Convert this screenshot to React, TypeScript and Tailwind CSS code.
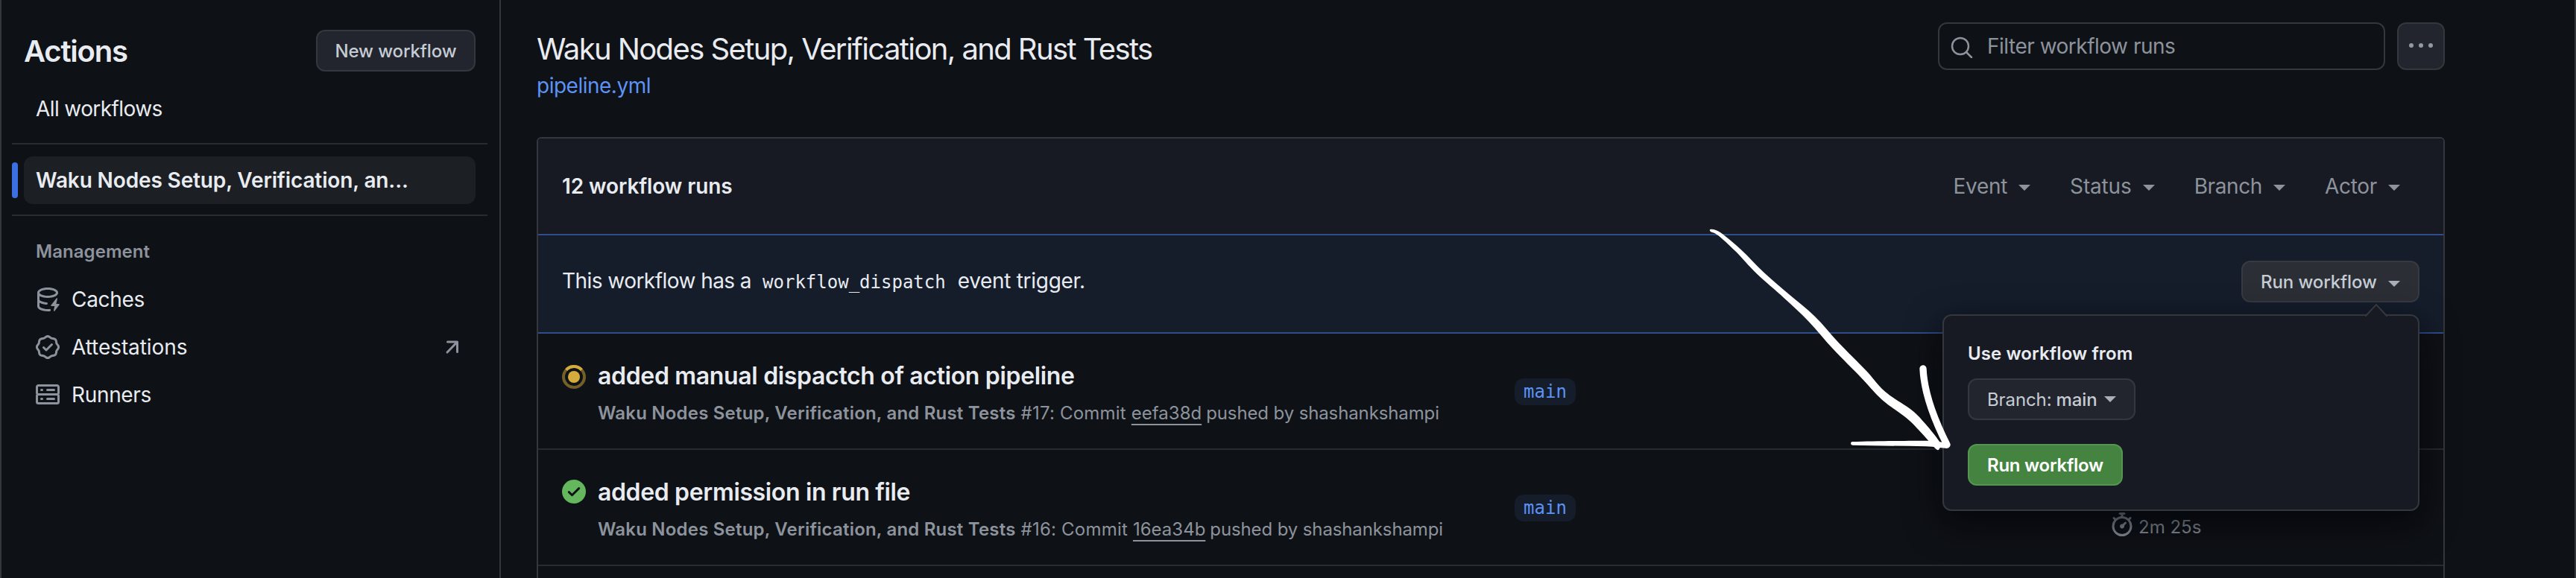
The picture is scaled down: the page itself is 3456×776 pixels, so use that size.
import type { ReactNode } from 'react';

type Point = [number, number];

/** Closed outline through the points, rounded with Catmull-Rom segments. */
function smoothOutline(points: Point[]): string {
  const n = points.length;
  const at = (i: number) => points[(i + n) % n];
  let d = `M${at(0)[0]} ${at(0)[1]}`;
  for (let i = 0; i < n; i++) {
    const [a, b, c, e] = [at(i - 1), at(i), at(i + 1), at(i + 2)];
    d += `C${b[0] + (c[0] - a[0]) / 6} ${b[1] + (c[1] - a[1]) / 6} ${c[0] - (e[0] - b[0]) / 6} ${c[1] - (e[1] - b[1]) / 6} ${c[0]} ${c[1]}`;
  }
  return d + 'Z';
}

const shaft: Point[] = [
  [138, 83], [175, 97], [260, 168], [350, 258], [450, 345], [555, 435], [650, 540], [760, 652], [838, 738],
  [945, 812], [1000, 868], [1060, 945], [1056, 966], [1042, 968], [985, 905], [925, 845], [825, 770], [740, 680],
  [630, 568], [530, 455], [430, 360], [320, 262], [235, 172], [165, 108], [134, 92],
];

const icons = {
  cache:
    'M2.5 5.724V8c0 .248.238.7 1.169 1.159.874.43 2.144.745 3.62.822a.75.75 0 1 1-.078 1.498c-1.622-.085-3.102-.432-4.204-.975a5.565 5.565 0 0 1-.507-.28V12.5c0 .133.058.318.282.551.227.237.591.483 1.101.707 1.015.447 2.47.742 4.117.742.406 0 .802-.018 1.183-.052a.751.751 0 1 1 .134 1.494C8.89 15.98 8.45 16 8 16c-1.805 0-3.475-.32-4.721-.869-.623-.274-1.173-.619-1.579-1.041-.408-.425-.7-.964-.7-1.59v-9c0-.626.292-1.165.7-1.591.406-.42.956-.766 1.579-1.04C4.525.32 6.195 0 8 0c1.806 0 3.476.32 4.721.869.623.274 1.173.619 1.579 1.041.408.425.7.964.7 1.59 0 .626-.292 1.165-.7 1.591-.406.42-.956.766-1.578 1.04C11.475 6.68 9.805 7 8 7c-1.805 0-3.475-.32-4.721-.869a6.15 6.15 0 0 1-.779-.407Zm0-2.224c0 .133.058.318.282.551.227.237.591.483 1.101.707C4.898 5.205 6.353 5.5 8 5.5c1.646 0 3.101-.295 4.118-.742.508-.224.873-.471 1.1-.708.224-.232.282-.417.282-.55 0-.133-.058-.318-.282-.551-.227-.237-.591-.483-1.101-.707C11.102 1.795 9.647 1.5 8 1.5c-1.646 0-3.101.295-4.118.742-.508.224-.873.471-1.1.708-.224.232-.282.417-.282.55ZM14.49 7.582a.375.375 0 0 0-.66-.313l-3.625 4.625a.375.375 0 0 0 .295.606h2.127l-.619 2.922a.375.375 0 0 0 .666.304l3.125-4.125A.375.375 0 0 0 15.5 11h-1.778l.769-3.418Z',
  verified:
    'm9.585.52.929.68c.153.112.331.186.518.215l1.138.175a2.678 2.678 0 0 1 2.24 2.24l.174 1.139c.029.187.103.365.215.518l.68.928a2.677 2.677 0 0 1 0 3.17l-.68.928a1.174 1.174 0 0 0-.215.518l-.175 1.138a2.678 2.678 0 0 1-2.241 2.241l-1.138.175a1.17 1.17 0 0 0-.518.215l-.928.68a2.677 2.677 0 0 1-3.17 0l-.928-.68a1.174 1.174 0 0 0-.518-.215L3.83 14.41a2.678 2.678 0 0 1-2.24-2.24l-.175-1.138a1.17 1.17 0 0 0-.215-.518l-.68-.928a2.677 2.677 0 0 1 0-3.17l.68-.928c.112-.153.186-.331.215-.518l.175-1.14a2.678 2.678 0 0 1 2.24-2.24l1.139-.175c.187-.029.365-.103.518-.215l.928-.68a2.677 2.677 0 0 1 3.17 0ZM7.303 1.728l-.927.68a2.67 2.67 0 0 1-1.18.489l-1.137.174a1.179 1.179 0 0 0-.987.987l-.174 1.136a2.677 2.677 0 0 1-.489 1.18l-.68.928a1.18 1.18 0 0 0 0 1.394l.68.927c.256.348.424.753.489 1.18l.174 1.137c.078.509.478.909.987.987l1.136.174a2.67 2.67 0 0 1 1.18.489l.928.68c.414.305.979.305 1.394 0l.927-.68a2.67 2.67 0 0 1 1.18-.489l1.137-.174a1.18 1.18 0 0 0 .987-.987l.174-1.136a2.67 2.67 0 0 1 .489-1.18l.68-.928a1.176 1.176 0 0 0 0-1.394l-.68-.927a2.686 2.686 0 0 1-.489-1.18l-.174-1.137a1.179 1.179 0 0 0-.987-.987l-1.136-.174a2.677 2.677 0 0 1-1.18-.489l-.928-.68a1.176 1.176 0 0 0-1.394 0ZM11.28 6.78l-3.75 3.75a.75.75 0 0 1-1.06 0L4.72 8.78a.751.751 0 0 1 .018-1.042.751.751 0 0 1 1.042-.018L7 8.94l3.22-3.22a.751.751 0 0 1 1.042.018.751.751 0 0 1 .018 1.042Z',
  server:
    'M1.75 1h12.5c.966 0 1.75.784 1.75 1.75v4c0 .372-.116.717-.314 1 .198.283.314.628.314 1v4a1.75 1.75 0 0 1-1.75 1.75H1.75A1.75 1.75 0 0 1 0 12.75v-4c0-.358.109-.707.314-1a1.739 1.739 0 0 1-.314-1v-4C0 1.784.784 1 1.75 1ZM1.5 2.75v4c0 .138.112.25.25.25h12.5a.25.25 0 0 0 .25-.25v-4a.25.25 0 0 0-.25-.25H1.75a.25.25 0 0 0-.25.25Zm.25 5.75a.25.25 0 0 0-.25.25v4c0 .138.112.25.25.25h12.5a.25.25 0 0 0 .25-.25v-4a.25.25 0 0 0-.25-.25ZM7 4.75A.75.75 0 0 1 7.75 4h4.5a.75.75 0 0 1 0 1.5h-4.5A.75.75 0 0 1 7 4.75ZM7.75 10h4.5a.75.75 0 0 1 0 1.5h-4.5a.75.75 0 0 1 0-1.5ZM3 4.75A.75.75 0 0 1 3.75 4h.5a.75.75 0 0 1 0 1.5h-.5A.75.75 0 0 1 3 4.75ZM3.75 10h.5a.75.75 0 0 1 0 1.5h-.5a.75.75 0 0 1 0-1.5Z',
  stopwatch:
    'M5.75.75A.75.75 0 0 1 6.5 0h3a.75.75 0 0 1 0 1.5h-.75v1l-.001.041a6.724 6.724 0 0 1 3.464 1.435l.007-.006.75-.75a.749.749 0 0 1 1.275.326.749.749 0 0 1-.215.734l-.75.75-.006.007a6.75 6.75 0 1 1-10.548 0L2.72 5.03l-.75-.75a.751.751 0 0 1 .018-1.042.751.751 0 0 1 1.042-.018l.75.75.007.006A6.72 6.72 0 0 1 7.25 2.541V1.5H6.5a.75.75 0 0 1-.75-.75ZM8 14.5a5.25 5.25 0 1 0-.001-10.501A5.25 5.25 0 0 0 8 14.5Zm.389-6.7 1.33-1.33a.75.75 0 1 1 1.061 1.06L9.45 8.861A1.503 1.503 0 0 1 8 10.75a1.499 1.499 0 1 1 .389-2.95Z',
};

function Icon({ path }: { path: string }) {
  return (
    <svg viewBox="0 0 16 16" className="size-8 shrink-0 fill-[#8d939c]">
      <path d={path} />
    </svg>
  );
}

function Caret({ className }: { className: string }) {
  return (
    <svg viewBox="0 0 16 8" className={`h-2 w-4 shrink-0 fill-current ${className}`}>
      <path d="M0 0h16L8 8Z" />
    </svg>
  );
}

function RunningIcon() {
  return (
    <svg viewBox="0 0 32 32" className="mt-[10px] size-8" fill="none">
      <circle cx="16" cy="16" r="14" stroke="#735f28" strokeWidth="4" />
      <path d="M5.6 6.6A14 14 0 0 1 26.4 6.6" stroke="#d4ab3c" strokeWidth="4" />
      <circle cx="16" cy="16" r="8" fill="#d4ab3c" />
    </svg>
  );
}

function SuccessIcon() {
  return (
    <svg viewBox="0 0 32 32" className="mt-2 size-8" fill="none">
      <circle cx="16" cy="16" r="16" fill="#65b75e" />
      <path d="M9.3 16.6 13.5 20.8 22.7 11.6" stroke="#0e1116" strokeWidth="2.9" strokeLinecap="round" strokeLinejoin="round" />
    </svg>
  );
}

function NavItem({ path, label, trailing }: { path: string; label: ReactNode; trailing?: ReactNode }) {
  return (
    <li className="flex h-16 items-center gap-4 pl-[46px] pr-[53px]">
      <Icon path={path} />
      {label}
      {trailing}
    </li>
  );
}

function Sidebar() {
  return (
    <aside className="h-full w-[672px] shrink-0 border-x-2 border-[#34373b] text-[28px] leading-[40px]">
      <div className="mt-10 flex h-14 items-center justify-between pl-[30px] pr-8">
        <h2 className="pt-[2px] text-[40px] leading-[56px] font-semibold tracking-[-1.2px]">Actions</h2>
        <button className="flex h-14 w-[214px] items-center justify-center rounded-xl border-2 border-[#34373c] bg-[#22252d] text-2xl font-medium tracking-[-0.1px] text-[#c6ccd4]">
          <span className="pt-[2px]">New workflow</span>
        </button>
      </div>
      <div className="mt-[18px] flex h-16 items-center pl-[46px] tracking-[-0.6px]">All workflows</div>
      <hr className="ml-[14px] mr-4 mt-[14px] border-t-2 border-[#282b30]" />
      <div className="mt-4 flex h-16 items-center gap-2 pl-[14px]">
        <span className="h-12 w-2 rounded bg-[#3c70e2]" />
        <span className="flex h-16 w-[606px] items-center rounded-xl bg-[#1c1f24] pl-4 font-semibold tracking-[-0.13px]">
          Waku Nodes Setup, Verification, an...
        </span>
      </div>
      <hr className="ml-[14px] mr-4 mt-[14px] border-t-2 border-[#282b30]" />
      <h3 className="mt-[30px] pl-[46px] text-2xl leading-[36px] font-semibold tracking-[0.05px] text-[#8d939c]">Management</h3>
      <ul className="mt-[14px]">
        <NavItem path={icons.cache} label={<span className="tracking-[-0.3px]">Caches</span>} />
        <NavItem
          path={icons.verified}
          label={<span className="tracking-[-0.07px]">Attestations</span>}
          trailing={
            <svg viewBox="0 0 20 20" className="ml-auto size-5" fill="none" stroke="#8d939c" strokeWidth="3">
              <path d="M3.5 3H16.5V16.5M16.5 3 3 17" strokeLinejoin="round" strokeLinecap="round" />
            </svg>
          }
        />
        <NavItem path={icons.server} label={<span className="tracking-[-0.33px]">Runners</span>} />
      </ul>
    </aside>
  );
}

function Popover() {
  return (
    <div className="absolute right-0 top-[72px] z-10 flex h-[264px] w-[640px] flex-col items-start rounded-xl border-2 border-[#34373c] bg-[#171a22] px-8 pt-[33px] text-2xl leading-[36px] shadow-[0_16px_48px_rgba(1,4,9,0.8)]">
      <svg viewBox="0 0 32 18" className="absolute -top-[16px] right-[40px] h-[18px] w-8">
        <path d="M2 17 16 1 30 17V18H2Z" fill="#171a22" />
        <path d="M1 16 H2 L16 1 30 16H31" fill="none" stroke="#34373c" strokeWidth="2" />
      </svg>
      <h4 className="font-semibold tracking-[0.1px] text-[#e8ebf0]">Use workflow from</h4>
      <button className="mt-[15px] flex h-14 w-[225px] items-center rounded-xl border-2 border-[#34373c] bg-[#22252d] pl-[24px] text-[#c6ccd4]">
        <span className="pt-[2px] tracking-[-0.1px]">Branch:</span>
        <span className="ml-[6px] pt-[2px] font-medium tracking-[-0.1px]">main</span>
        <Caret className="ml-auto mr-6 text-[#a9afb6]" />
      </button>
      <button className="mt-8 flex h-14 w-[208px] items-center justify-center rounded-xl border-2 border-[#559551] bg-[#448440] font-semibold tracking-[-0.25px] text-white">
        <span className="pt-[2px]">Run workflow</span>
      </button>
    </div>
  );
}

interface RunProps {
  icon: ReactNode;
  title: ReactNode;
  run: string;
  commit: string;
  duration?: string;
}

function RunRow({ icon, title, run, commit, duration }: RunProps) {
  return (
    <li className="flex h-[156px] items-start border-b-2 border-[#282b30] pl-8">
      <div className="flex w-[1278px] gap-4 pt-8">
        {icon}
        <div className="pt-px">
          <h3 className="text-[32px] leading-[48px] font-semibold">{title}</h3>
          <p className="mt-2 flex whitespace-nowrap text-2xl leading-[36px] text-[#8d939c]">
            <span className="font-semibold tracking-[0.2px]">Waku Nodes Setup, Verification, and Rust Tests</span>
            <span className="ml-[7px] tracking-[0.2px]">{run}: Commit</span>
            <a className="ml-[7px] underline decoration-2 underline-offset-[6px]">{commit}</a>
            <span className="ml-[6px] tracking-[-0.12px]">pushed by shashankshampi</span>
          </p>
        </div>
      </div>
      <div className="w-[799px] pt-[60px]">
        <span className="flex h-9 w-[82px] items-center justify-center rounded-xl bg-[#151d2b] font-['DejaVu_Sans_Mono',monospace] text-2xl leading-9 text-[#5c93f4]">
          main
        </span>
      </div>
      {duration && (
        <div className="flex items-start gap-[6px] pt-[84px] text-2xl leading-8 text-[#8d939c]">
          <Icon path={icons.stopwatch} />
          <span className="pt-1">{duration}</span>
        </div>
      )}
    </li>
  );
}

function Filter({ children }: { children: ReactNode }) {
  return (
    <button className="flex items-center">
      {children}
      <Caret className="ml-[15px] mt-1" />
    </button>
  );
}

function RunsTable() {
  return (
    <section className="h-[620px] rounded-t-md border-2 border-[#34373b] text-[28px] leading-[40px]">
      <header className="flex h-32 items-center rounded-t bg-[#171a22] pl-8 pr-[58px]">
        <strong className="font-semibold tracking-[-0.1px]">12 workflow runs</strong>
        <div className="ml-auto flex gap-[53px] text-[#8d939c]">
          <Filter><span className="tracking-[-0.3px]">Event</span></Filter>
          <Filter><span className="tracking-[-0.15px]">Status</span></Filter>
          <Filter><span className="tracking-[-0.4px]">Branch</span></Filter>
          <Filter><span className="tracking-[-0.3px]">Actor</span></Filter>
        </div>
      </header>
      <div className="flex h-[134px] items-start justify-between border-y-2 border-[#2f4d8a] bg-[#151d2b] pl-8 pr-8 pt-[34px]">
        <p className="flex items-baseline whitespace-nowrap pt-[7px]">
          <span className="tracking-[-0.55px]">This workflow has a</span>
          <code className="ml-[15px] font-['DejaVu_Sans_Mono',monospace] text-2xl">workflow_dispatch</code>
          <span className="ml-4 tracking-[-0.3px]">event trigger.</span>
        </p>
        <div className="relative">
          <button className="flex h-14 w-[239px] items-center rounded-xl border-2 border-[#373a40] bg-[#2b2e35] pl-6 text-2xl font-medium tracking-[-0.1px] text-[#c6ccd4]">
            <span className="pt-[2px]">Run workflow</span>
            <Caret className="ml-auto mr-6 mt-[6px] text-[#a9afb6]" />
          </button>
          <Popover />
        </div>
      </div>
      <ul>
        <RunRow
          icon={<RunningIcon />}
          title={<span className="tracking-[-0.33px]">added manual dispactch of action pipeline</span>}
          run="#17"
          commit="eefa38d"
        />
        <RunRow
          icon={<SuccessIcon />}
          title={<span className="tracking-[-0.36px]">added permission in run file</span>}
          run="#16"
          commit="16ea34b"
          duration="2m 25s"
        />
      </ul>
    </section>
  );
}

function HandDrawnArrow() {
  return (
    <svg viewBox="0 0 1500 1488" className="pointer-events-none absolute left-[2250px] top-[280px] z-20 h-[496px] w-[500px]">
      <path d={smoothOutline(shaft)} fill="#fff" />
      <path d="M990 645C994 740 1035 850 1086 951" fill="none" stroke="#fff" strokeWidth="28" strokeLinecap="round" />
      <path d="M706 939C800 936 940 935 1030 935L1086 944V965C1060 966 1045 959 1000 958C900 956 800 955 706 953A7 7 0 0 1 706 939Z" fill="#fff" />
    </svg>
  );
}

export default function App() {
  return (
    <div className="relative flex h-[776px] w-[3456px] overflow-hidden bg-[#0e1116] font-['Inter',sans-serif] text-[#e8ebf0]">
      <Sidebar />
      <main className="h-full flex-1 border-r-2 border-[#34373b] pl-12 pr-[174px]">
        <div className="flex h-[184px] items-start pt-[30px]">
          <div>
            <h1 className="mt-2 text-[40px] leading-[56px] tracking-[-1.6px] whitespace-nowrap">
              Waku Nodes Setup, Verification, and Rust Tests
            </h1>
            <a className="block text-[28px] leading-[42px] tracking-[-0.5px] text-[#5c93f4]">pipeline.yml</a>
          </div>
          <div className="ml-auto flex gap-4 text-[28px]">
            <div className="flex h-16 w-[600px] items-center gap-[18px] rounded-xl border-2 border-[#34373b] pl-[14px] tracking-[-0.5px] text-[#8d939c]">
              <svg viewBox="0 0 32 32" className="size-8" fill="none" stroke="#8d939c" strokeWidth="2.5" strokeLinecap="round">
                <circle cx="14" cy="16" r="11" />
                <path d="M22 24 29 31" />
              </svg>
              Filter workflow runs
            </div>
            <button className="flex h-16 w-16 items-center justify-center gap-[7px] rounded-xl border-2 border-[#34373c] bg-[#22252d] pb-[2px]">
              <span className="size-[6px] rounded-full bg-[#9399a2]" />
              <span className="size-[6px] rounded-full bg-[#9399a2]" />
              <span className="size-[6px] rounded-full bg-[#9399a2]" />
            </button>
          </div>
        </div>
        <RunsTable />
      </main>
      <HandDrawnArrow />
    </div>
  );
}
